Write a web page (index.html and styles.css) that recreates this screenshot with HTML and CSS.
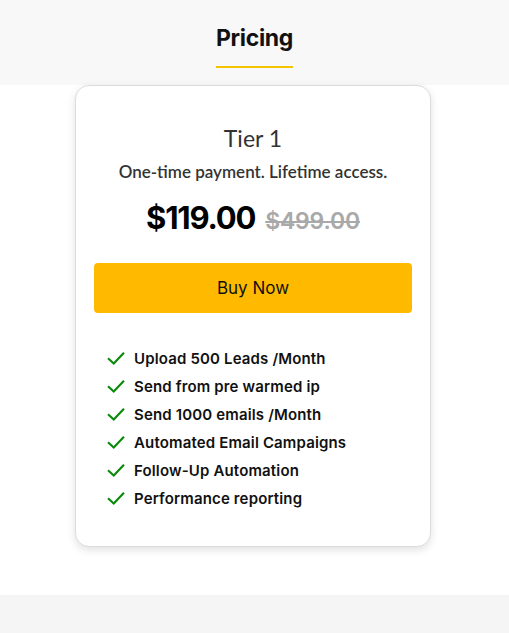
FILE: index.html
```html
<!DOCTYPE html>
<html>
<head>
<meta charset="utf-8">
<link rel="stylesheet" href="styles.css">
</head>
<body>
<header class="top">
  <h1 class="title">Pricing</h1>
  <div class="underline"></div>
</header>
<main class="main">
  <div class="card">
    <h2 class="tier">Tier 1</h2>
    <p class="sub">One-time payment. Lifetime access.</p>
    <div class="price">
      <span class="now">$119.00</span>
      <span class="old">$499.00</span>
    </div>
    <button class="buy">Buy Now</button>
    <ul class="features">
      <li><svg class="check" viewBox="0 0 20 16"><path d="M2 8.5 L7.5 13.5 L18 2.5" fill="none" stroke="#0a8a0a" stroke-width="2.4" stroke-linecap="square"/></svg>Upload 500 Leads /Month</li>
      <li><svg class="check" viewBox="0 0 20 16"><path d="M2 8.5 L7.5 13.5 L18 2.5" fill="none" stroke="#0a8a0a" stroke-width="2.4" stroke-linecap="square"/></svg>Send from pre warmed ip</li>
      <li><svg class="check" viewBox="0 0 20 16"><path d="M2 8.5 L7.5 13.5 L18 2.5" fill="none" stroke="#0a8a0a" stroke-width="2.4" stroke-linecap="square"/></svg>Send 1000 emails /Month</li>
      <li><svg class="check" viewBox="0 0 20 16"><path d="M2 8.5 L7.5 13.5 L18 2.5" fill="none" stroke="#0a8a0a" stroke-width="2.4" stroke-linecap="square"/></svg>Automated Email Campaigns</li>
      <li><svg class="check" viewBox="0 0 20 16"><path d="M2 8.5 L7.5 13.5 L18 2.5" fill="none" stroke="#0a8a0a" stroke-width="2.4" stroke-linecap="square"/></svg>Follow-Up Automation</li>
      <li><svg class="check" viewBox="0 0 20 16"><path d="M2 8.5 L7.5 13.5 L18 2.5" fill="none" stroke="#0a8a0a" stroke-width="2.4" stroke-linecap="square"/></svg>Performance reporting</li>
    </ul>
  </div>
</main>
<footer class="bottom"></footer>
</body>
</html>
```
FILE: styles.css
```css
html, body {
  margin: 0;
  padding: 0;
  background: #ffffff;
  font-family: "Inter", "Noto Sans", sans-serif;
}
.top {
  background: #f8f8f8;
  height: 85px;
  display: flex;
  flex-direction: column;
  align-items: center;
  box-sizing: border-box;
  padding-top: 24px;
}
.title {
  margin: 0;
  font-size: 23px;
  font-weight: 700;
  color: #111;
  line-height: 28px;
  letter-spacing: -0.3px;
}
.underline {
  margin-top: 14px;
  width: 77px;
  height: 2px;
  background: #f5c400;
}
.main {
  display: flex;
  justify-content: center;
  padding-bottom: 48px;
  padding-right: 3px;
}
.card {
  width: 356px;
  box-sizing: border-box;
  border: 1px solid #dcdcdc;
  border-radius: 14px;
  box-shadow: 0 3px 8px rgba(0,0,0,0.12);
  padding: 38px 18px 37px;
  display: flex;
  flex-direction: column;
  align-items: center;
  background: #fff;
}
.tier {
  margin: 0;
  font-family: "Lato", sans-serif;
  font-weight: 400;
  font-size: 23px;
  line-height: 28px;
  color: #333;
}
.sub {
  margin: 10px 0 0;
  font-family: "Lato", sans-serif;
  font-weight: 600;
  font-size: 17px;
  line-height: 20px;
  color: #333;
}
.price {
  margin-top: 17px;
  display: flex;
  align-items: baseline;
  gap: 10px;
}
.now {
  font-size: 31px;
  font-weight: 700;
  color: #000;
  letter-spacing: -1.2px;
}
.old {
  font-size: 23px;
  font-weight: 600;
  color: #a9a9a9;
  text-decoration: line-through;
  letter-spacing: -0.2px;
}
.buy {
  margin-top: 27px;
  width: 100%;
  height: 50px;
  border: none;
  border-radius: 4px;
  background: #ffba00;
  color: #111;
  font-family: "Inter", sans-serif;
  font-size: 17px;
  font-weight: 400;
}
.features {
  list-style: none;
  margin: 35px 0 0;
  padding: 0 0 0 13px;
  align-self: stretch;
  display: flex;
  flex-direction: column;
  gap: 7px;
}
.features li {
  display: flex;
  align-items: center;
  gap: 9px;
  font-size: 15px;
  font-weight: 600;
  line-height: 21px;
  color: #111;
  letter-spacing: 0.15px;
}
.check {
  width: 18px;
  height: 15px;
  flex: none;
}
.bottom {
  background: #f5f5f5;
  height: 40px;
}
```
